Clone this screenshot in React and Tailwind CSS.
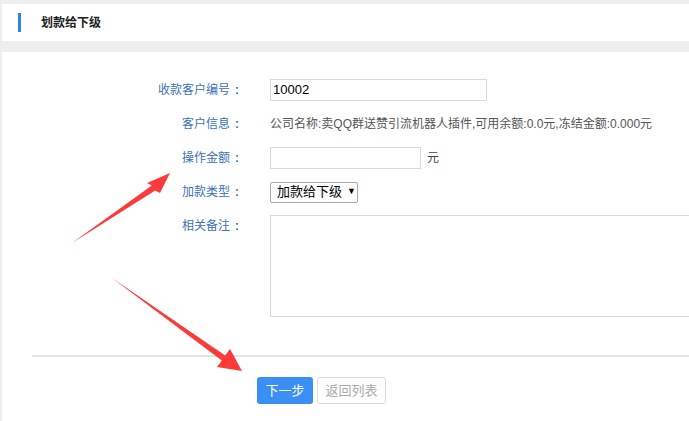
import React from "react"

const labelCls = "w-[242px] shrink-0 text-right text-[12px] text-[#3b72b8] leading-[22px]"

function Row({ label, children, top }) {
  return (
    <div className={"flex " + (top ? "items-start" : "items-center h-[22px]")}>
      <div className={labelCls}>
        {label}
        <span className="inline-block w-[14px] text-center font-bold">:</span>
      </div>
      <div className="ml-[26px] flex items-center">{children}</div>
    </div>
  )
}

function Arrows() {
  return (
    <svg className="absolute left-0 top-0 pointer-events-none" width="689" height="421" viewBox="0 0 689 421">
      <polygon fill="#fd3a3a" points="72,243 151.8,185.6 147,183 170,173 160,193 155.2,190.4" />
      <polygon fill="#fd3a3a" points="112,278 225.2,355.6 230,349 242,371 217,367 221.8,360.4" />
    </svg>
  )
}

export default function App() {
  return (
    <div className="relative w-[689px] h-[421px] overflow-hidden bg-[#eeeeee] pt-[4px] pl-[2px]" style={{ fontFamily: '"Liberation Sans", "Noto Sans CJK SC", sans-serif' }}>
      {/* header */}
      <div className="bg-white h-[37px] flex items-center">
        <div className="ml-[16px] w-[3px] h-[19px] bg-[#2a8ad8]"></div>
        <div className="ml-[20px] text-[12px] font-bold text-[#222]">划款给下级</div>
      </div>

      {/* form panel */}
      <div className="mt-[11px] bg-white h-[400px] pt-[27px]">
        <div className="flex flex-col gap-[12px]">
          <Row label="收款客户编号">
            <div className="w-[217px] h-[22px] border border-[#d9d9d9] px-[2px] text-[13px] leading-[20px] text-black">10002</div>
          </Row>
          <Row label="客户信息">
            <span className="text-[12px] text-[#555]">公司名称:卖QQ群送赞引流机器人插件,可用余额:0.0元,冻结金额:0.000元</span>
          </Row>
          <Row label="操作金额">
            <div className="w-[151px] h-[22px] border border-[#d9d9d9]"></div>
            <span className="ml-[6px] text-[12px] text-[#444]">元</span>
          </Row>
          <Row label="加款类型">
            <div className="h-[21px] w-[88px] border border-[#a9a9a9] rounded-[2px] flex items-center pl-[6px] text-[13px] text-black">
              <span>加款给下级</span>
              <span className="ml-[5px] text-[9px]">▼</span>
            </div>
          </Row>
          <Row label="相关备注" top>
            <div className="w-[450px] h-[102px] border border-[#d9d9d9]"></div>
          </Row>
        </div>

        <div className="ml-[30px] mt-[38px] h-[2px] bg-[#e2e2e2]"></div>

        <div className="mt-[20px] ml-[255px] flex gap-[4px]">
          <button className="w-[56px] h-[27px] rounded-[3px] bg-[#3a8ff6] text-white text-[13px]">下一步</button>
          <button className="w-[69px] h-[27px] rounded-[3px] border border-[#dadad5] bg-white text-[#aaa] text-[13px]">返回列表</button>
        </div>
      </div>

      <Arrows />
    </div>
  )
}
